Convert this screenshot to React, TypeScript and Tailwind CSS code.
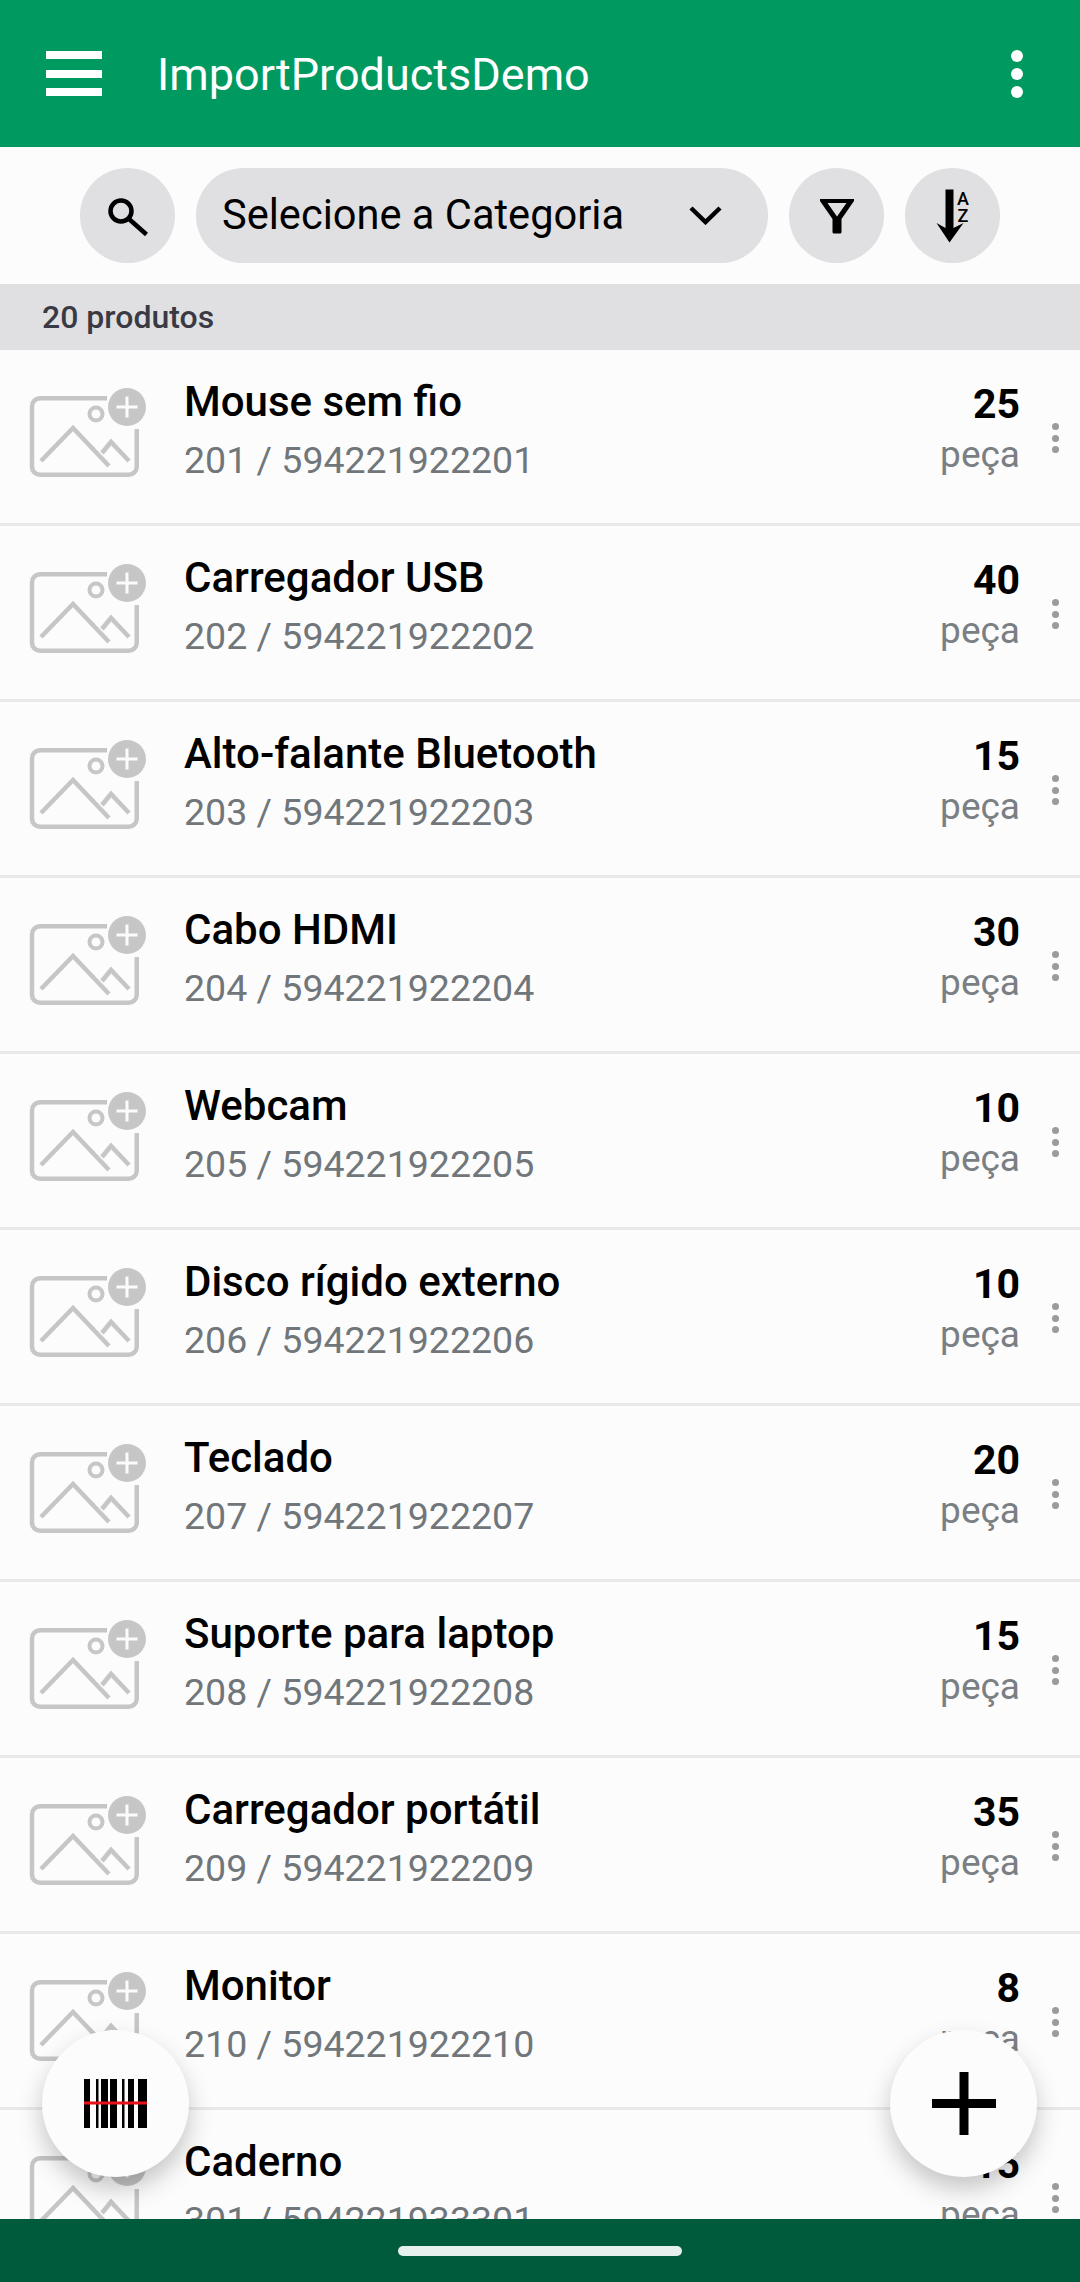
const products = [
  { name: "Mouse sem fio", code: "201 / 594221922201", qty: "25" },
  { name: "Carregador USB", code: "202 / 594221922202", qty: "40" },
  { name: "Alto-falante Bluetooth", code: "203 / 594221922203", qty: "15" },
  { name: "Cabo HDMI", code: "204 / 594221922204", qty: "30" },
  { name: "Webcam", code: "205 / 594221922205", qty: "10" },
  { name: "Disco rígido externo", code: "206 / 594221922206", qty: "10" },
  { name: "Teclado", code: "207 / 594221922207", qty: "20" },
  { name: "Suporte para laptop", code: "208 / 594221922208", qty: "15" },
  { name: "Carregador portátil", code: "209 / 594221922209", qty: "35" },
  { name: "Monitor", code: "210 / 594221922210", qty: "8" },
  { name: "Caderno", code: "301 / 594221933301", qty: "15" },
];

const PhotoPlaceholder = () => (
  <svg width="120" height="94" viewBox="0 0 120 94" className="flex-none" fill="none">
    <path
      d="M79 11.25H12a8 8 0 0 0-8 8V79.75a8 8 0 0 0 8 8H100.75a8 8 0 0 0 8-8V42"
      stroke="#c6c6c6"
      strokeWidth="4.5"
    />
    <path d="M13 74L45 41L81 79M74 66L83 55L101 74" stroke="#c6c6c6" strokeWidth="4.5" />
    <circle cx="68" cy="27" r="6.5" stroke="#c6c6c6" strokeWidth="4" />
    <circle cx="99" cy="20" r="19" fill="#c6c6c6" />
    <path d="M99 9.5V30.5M88.5 20H109.5" stroke="#fcfcfd" strokeWidth="3" />
  </svg>
);

const ProductRow = ({ name, code, qty }: { name: string; code: string; qty: string }) => (
  <div className="flex h-[176px] flex-none items-start border-b-[3px] border-[#e9e9eb] pl-[28px]">
    <div className="mt-[37px]">
      <PhotoPlaceholder />
    </div>
    <div className="ml-[36px] mt-[28px] flex min-w-0 flex-1 flex-col">
      <span className="text-[42px] font-medium leading-[48px] text-black">{name}</span>
      <span className="mt-[11px] text-[37.5px] leading-[46px] text-[#70767a]">{code}</span>
    </div>
    <div className="mt-[29px] flex flex-col items-end">
      <span className="text-[41px] font-bold leading-[50px] text-black">{qty}</span>
      <span className="mt-[3px] text-[37px] leading-[46px] text-[#7a7f83]">peça</span>
    </div>
    <div className="ml-[30px] mr-[20px] mt-[73px] flex w-[10px] flex-col items-center gap-[4.6px]">
      <span className="h-[7px] w-[7px] rounded-full bg-[#9b9b9b]" />
      <span className="h-[7px] w-[7px] rounded-full bg-[#9b9b9b]" />
      <span className="h-[7px] w-[7px] rounded-full bg-[#9b9b9b]" />
    </div>
  </div>
);

export default function App() {
  return (
    <div className="relative flex h-[2282px] w-[1080px] flex-col overflow-hidden bg-[#fcfcfd] font-['Roboto',sans-serif]">
      <header className="flex h-[147px] flex-none items-center bg-[#009960] pl-[46px] pr-[57px]">
        <div className="flex h-[45px] w-[56px] flex-col justify-between">
          <span className="h-[8px] bg-white" />
          <span className="h-[8px] bg-white" />
          <span className="h-[8px] bg-white" />
        </div>
        <h1 className="ml-[55px] mt-[3px] flex-1 text-[45px] font-normal text-white">ImportProductsDemo</h1>
        <div className="flex h-[48px] w-[12px] flex-col justify-between">
          <span className="h-[12px] w-[12px] rounded-full bg-white" />
          <span className="h-[12px] w-[12px] rounded-full bg-white" />
          <span className="h-[12px] w-[12px] rounded-full bg-white" />
        </div>
      </header>

      <div className="flex h-[137px] flex-none items-center gap-[21px] pl-[80px]">
        <button className="flex h-[95px] w-[95px] items-center justify-center rounded-full bg-[#e0e0e2]">
          <svg width="44" height="44" viewBox="0 0 44 44" fill="none" stroke="#000" strokeWidth="4.5">
            <circle cx="15" cy="17" r="10.5" />
            <path d="M23 25L40.5 40.5" />
          </svg>
        </button>
        <div className="flex h-[95px] w-[572px] items-center justify-between rounded-full bg-[#e0e0e2] pl-[26px] pr-[46px]">
          <span className="text-[41.6px] text-black">Selecione a Categoria</span>
          <svg width="33" height="19" viewBox="0 0 33 19" fill="none" stroke="#000" strokeWidth="4.5">
            <path d="M2 2L16.5 16L31 2" />
          </svg>
        </div>
        <button className="flex h-[95px] w-[95px] items-center justify-center rounded-full bg-[#e0e0e2]">
          <svg width="36" height="36" viewBox="0 0 36 36">
            <path
              d="M1 1H35V3L22.5 21V34a1.5 1.5 0 0 1-1.5 1.5H15a1.5 1.5 0 0 1-1.5-1.5V21L1 3ZM8.5 5L18 18.5L27.5 5Z"
              fill="#000"
              fillRule="evenodd"
            />
          </svg>
        </button>
        <button className="flex h-[95px] w-[95px] items-center justify-center rounded-full bg-[#e0e0e2]">
          <svg width="40" height="56" viewBox="0 0 40 56">
            <path d="M12.5 1.5H20.5V40L30.5 35L16.5 54.5L3.5 35L12.5 40Z" fill="#000" />
            <text x="30" y="16.5" fontFamily="Roboto" fontSize="18" fontWeight="500" textAnchor="middle" fill="#000">A</text>
            <text x="30" y="33.5" fontFamily="Roboto" fontSize="18" fontWeight="500" textAnchor="middle" fill="#000">Z</text>
          </svg>
        </button>
      </div>

      <div className="flex h-[66px] flex-none items-center bg-[#e0e0e2] pl-[42px]">
        <span className="text-[32px] font-medium text-[#3a3a44]">20 produtos</span>
      </div>

      <main className="flex min-h-0 flex-1 flex-col overflow-hidden">
        {products.map((p) => (
          <ProductRow key={p.code} {...p} />
        ))}
      </main>

      <footer className="flex h-[63px] flex-none items-start justify-center bg-[#005a3c] pt-[27px]">
        <span className="h-[10px] w-[284px] rounded-full bg-[#e6f0ec]" />
      </footer>

      <button className="absolute left-[42px] top-[2030px] flex h-[147px] w-[147px] items-center justify-center rounded-full bg-[#fcfcfd] shadow-[0_12px_24px_rgba(0,0,0,0.22)]">
        <svg width="63" height="49" viewBox="0 0 63 49">
          <path
            d="M0 0H6V49H0ZM12 0H14.5V49H12ZM17 0H24V49H17ZM26 0H33V49H26ZM38 0H40.5V49H38ZM44 0H50V49H44ZM54 0H63V49H54Z"
            fill="#000"
          />
          <rect x="0" y="22.5" width="63" height="3" fill="#e8101a" />
        </svg>
      </button>
      <button className="absolute left-[890px] top-[2030px] flex h-[147px] w-[147px] items-center justify-center rounded-full bg-[#fcfcfd] shadow-[0_12px_24px_rgba(0,0,0,0.22)]">
        <svg width="64" height="63" viewBox="0 0 64 63">
          <path d="M27.5 0H36.5V27H64V36H36.5V63H27.5V36H0V27H27.5Z" fill="#000" />
        </svg>
      </button>
    </div>
  );
}
